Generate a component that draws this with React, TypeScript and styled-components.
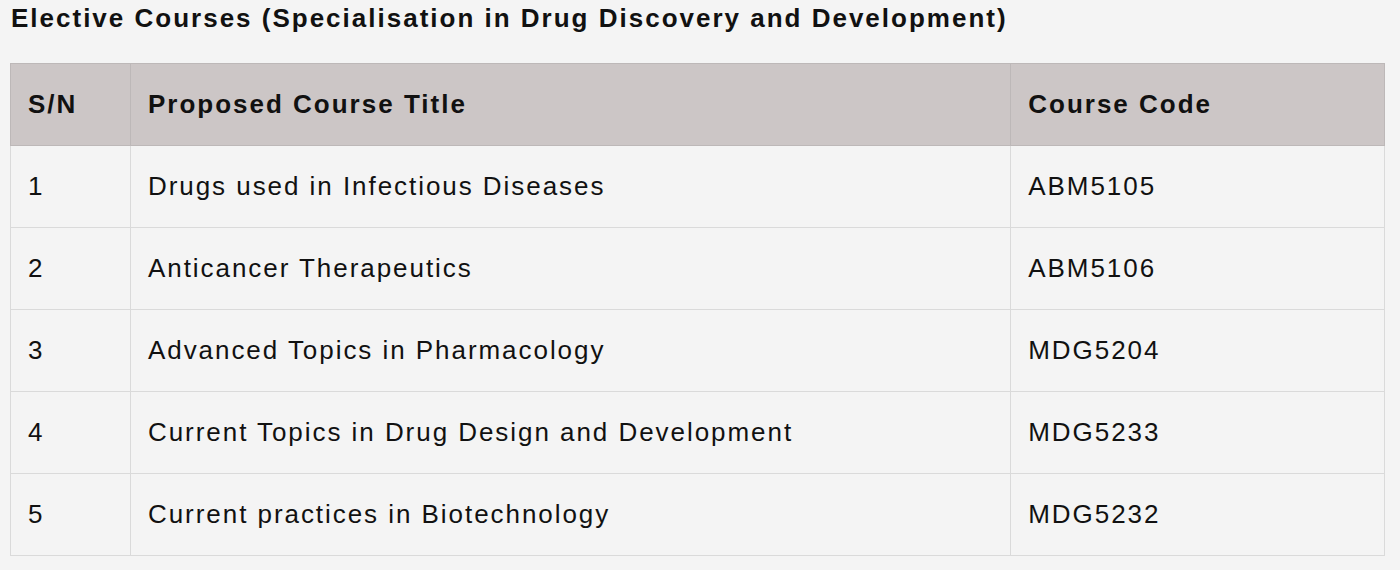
import styled, { createGlobalStyle } from "styled-components";

const GlobalStyle = createGlobalStyle`
  html, body {
    margin: 0;
    padding: 0;
    background: #f4f4f4;
  }
  body {
    font-family: "Liberation Sans", Arial, Helvetica, sans-serif;
    color: #111;
  }
`;

const Page = styled.div`
  width: 1400px;
  padding: 0 15px 0 10px;
  box-sizing: border-box;
`;

const Heading = styled.h3`
  margin: 0;
  padding-left: 1px;
  font-size: 26px;
  line-height: 36px;
  font-weight: 700;
  letter-spacing: 2px;
  color: #111;
`;

const Table = styled.table`
  margin-top: 27px;
  width: 1375px;
  border-collapse: collapse;
  background: #f4f4f4;
  border: 1px solid #d8d8d8;
`;

const HeadCell = styled.th<{ $width: number }>`
  width: ${(p) => p.$width}px;
  height: 82px;
  padding: 0 17px;
  box-sizing: border-box;
  background: #ccc6c6;
  border: 1px solid #bdb8b8;
  text-align: left;
  font-size: 26px;
  font-weight: 700;
  letter-spacing: 2px;
  color: #111;
`;

const Cell = styled.td`
  height: 81px;
  padding: 0 17px;
  border: 1px solid #dadada;
  font-size: 26px;
  letter-spacing: 1.95px;
  color: #111;
`;

const courses = [
  { sn: "1", title: "Drugs used in Infectious Diseases", code: "ABM5105" },
  { sn: "2", title: "Anticancer Therapeutics", code: "ABM5106" },
  { sn: "3", title: "Advanced Topics in Pharmacology", code: "MDG5204" },
  { sn: "4", title: "Current Topics in Drug Design and Development", code: "MDG5233" },
  { sn: "5", title: "Current practices in Biotechnology", code: "MDG5232" },
];

export default function App() {
  return (
    <Page>
      <GlobalStyle />
      <Heading>Elective Courses (Specialisation in Drug Discovery and Development)</Heading>
      <Table>
        <thead>
          <tr>
            <HeadCell $width={120}>S/N</HeadCell>
            <HeadCell $width={881}>Proposed Course Title</HeadCell>
            <HeadCell $width={374}>Course Code</HeadCell>
          </tr>
        </thead>
        <tbody>
          {courses.map((c) => (
            <tr key={c.sn}>
              <Cell>{c.sn}</Cell>
              <Cell>{c.title}</Cell>
              <Cell>{c.code}</Cell>
            </tr>
          ))}
        </tbody>
      </Table>
    </Page>
  );
}
